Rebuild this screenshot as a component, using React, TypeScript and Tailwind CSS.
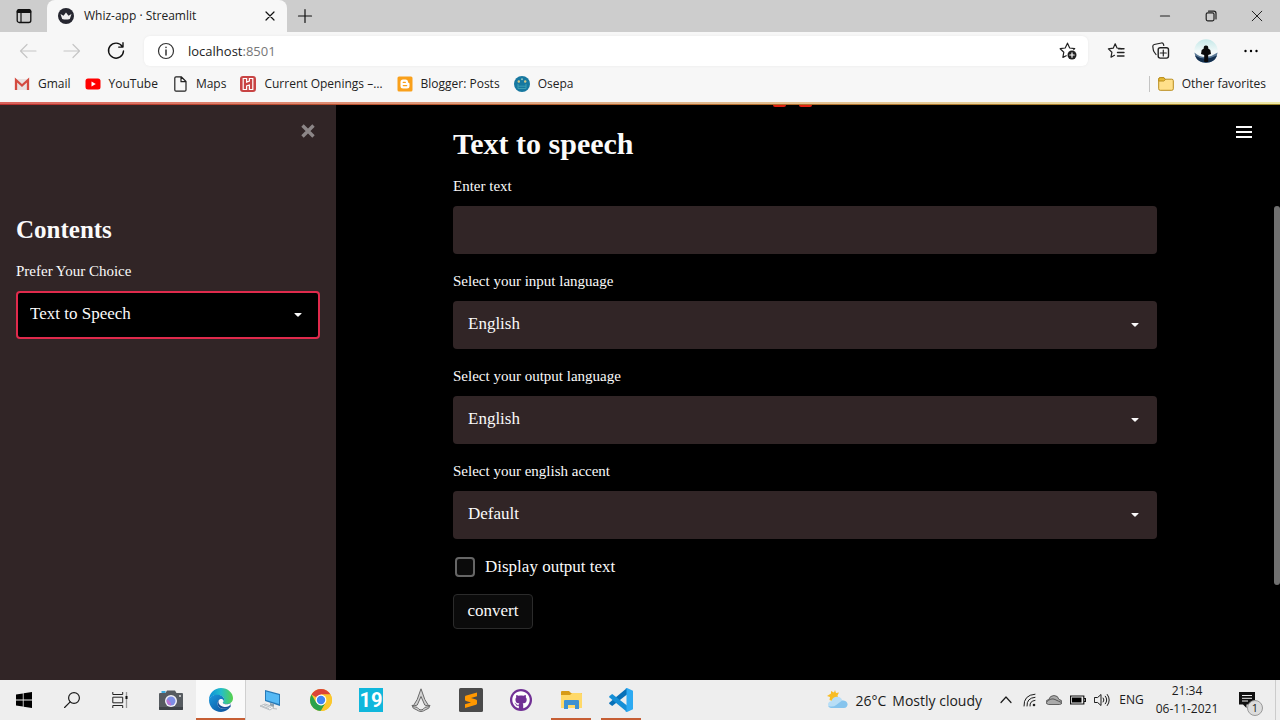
import { useState, type ReactNode } from "react";
import { FaGithub } from "react-icons/fa";

type BoxProps = { children: ReactNode; size?: string; box?: string };

function Line({ children, size = "size-5", box = "0 0 20 20" }: BoxProps) {
  return (
    <svg viewBox={box} className={size} fill="none" stroke="currentColor" strokeWidth="1.2" strokeLinecap="round" strokeLinejoin="round" aria-hidden="true">
      {children}
    </svg>
  );
}

function Art({ children, size = "size-6", box = "0 0 24 24" }: BoxProps) {
  return (
    <svg viewBox={box} className={size} aria-hidden="true">
      {children}
    </svg>
  );
}

const starPath = "M8.2 1.8 10 6l4.6.6M8.2 1.8 6.2 6.2 1.4 6.9l3.5 3.4-.9 4.9 3.5-1.9";

/* ---------- Browser chrome ---------- */

function TabStrip() {
  return (
    <div className="flex h-8 items-stretch bg-[#cdcdcd]">
      <button aria-label="Tab actions" className="flex w-[47px] items-center justify-center text-black">
        <Art size="size-4" box="0 0 16 16">
          <rect x="1.2" y="1.7" width="13.6" height="12.8" rx="2" fill="none" stroke="#111" strokeWidth="1.3" />
          <path d="M1.2 4.5V3.500a2 2 0 0 1 2-2h9.600a2 2 0 0 1 2 2v1z" fill="#111" stroke="#111" />
          <path d="M5 5v9.500" stroke="#111" strokeWidth="1.2" />
        </Art>
      </button>
      <div className="flex w-60 items-center rounded-t-lg bg-[#f7f7f7] pr-[7px] pl-[11px]">
        <Art size="size-4" box="0 0 16 16">
          <circle cx="8" cy="8" r="8" fill="#262730" />
          <path d="m2.500 6 3 1.700L8 4.600l2.500 3.100 3-1.700-1.700 5q-3.800 1-7.600 0z" fill="#f0f0f0" />
        </Art>
        <span className="flex-1 pl-2.5 text-[12px] text-[#222]">Whiz-app · Streamlit</span>
        <button aria-label="Close tab" className="flex size-5 items-center justify-center text-[#111]">
          <Line size="size-3" box="0 0 12 12">
            <path d="m2 2 8 8M10 2l-8 8" />
          </Line>
        </button>
      </div>
      <button aria-label="New tab" className="flex w-[35px] items-center justify-center text-[#111]">
        <Line size="size-4" box="0 0 16 16">
          <path d="M8 1.500v13M1.500 8h13" />
        </Line>
      </button>
      <div className="ml-auto flex text-[#222]">
        <button aria-label="Minimize" className="flex w-[46px] items-center justify-center">
          <Line size="size-3" box="0 0 12 12">
            <path d="M1.500 6h9" />
          </Line>
        </button>
        <button aria-label="Restore" className="flex w-[46px] items-center justify-center">
          <Line size="size-3" box="0 0 12 12">
            <rect x="1.2" y="2.800" width="7.800" height="8" rx="1.500" />
            <path d="M3.500 1.200h5.300q2.200 0 2.200 2.200V9" />
          </Line>
        </button>
        <button aria-label="Close window" className="flex w-[46px] items-center justify-center">
          <Line size="size-3" box="0 0 12 12">
            <path d="m1.200 1.200 9.600 9.600M10.800 1.200l-9.600 9.600" strokeWidth="1" />
          </Line>
        </button>
      </div>
    </div>
  );
}

const toolButton = "flex h-8 w-11 items-center justify-center";

function AddressRow() {
  return (
    <div className="flex items-center gap-1.5 py-[3px] pr-[7px] pl-1.5">
      <div className="flex">
        <button aria-label="Back" className={toolButton + " text-[#c6c6c6]"}>
          <Line>
            <path d="M18 10H2.500M9 3.500 2.500 10 9 16.500" />
          </Line>
        </button>
        <button aria-label="Forward" className={toolButton + " text-[#c6c6c6]"}>
          <Line>
            <path d="M2 10h15.500M11 3.500l6.500 6.500-6.500 6.500" />
          </Line>
        </button>
        <button aria-label="Refresh" className={toolButton + " text-[#111]"}>
          <Line>
            <path d="M16.200 5.400A7.500 7.500 0 1 0 17.500 10M17 1.800v4.300h-4.300" strokeWidth="1.400" />
          </Line>
        </button>
      </div>
      <div className="flex h-[30px] flex-1 items-center rounded-md bg-white pr-2.5 pl-3 shadow-[0_0_3px_rgba(0,0,0,0.06)]">
        <button aria-label="Site information" className="text-[#333]">
          <Line>
            <circle cx="10" cy="10" r="7.500" />
            <path d="M10 9v5M10 6.300v.2" strokeWidth="1.500" />
          </Line>
        </button>
        <a href="http://localhost:8501" className="flex-1 pl-3 text-[13px] leading-5 text-[#222]">
          localhost<span className="text-[#777]">:8501</span>
        </a>
        <button aria-label="Add to favorites" className="text-[#222]">
          <Line>
            <path d="M9.500 2.200 7.200 7 2.200 7.700l3.600 3.500-.9 5.200 3.300-1.700M9.500 2.200 11.700 7l5 .7-1 1" />
            <circle cx="14" cy="14" r="4.500" fill="#222" stroke="none" />
            <path d="M14 11.800v4.400M11.800 14h4.400" stroke="#fff" strokeWidth="1.200" />
          </Line>
        </button>
      </div>
      <div className="flex gap-px text-[#222]">
        <button aria-label="Favorites" className={toolButton}>
          <Line>
            <g transform="translate(1 1)">
              <path d={starPath} />
              <path d="M11.500 6.800H17M10.500 10.500H17M10.500 14H17" strokeWidth="1.400" />
            </g>
          </Line>
        </button>
        <button aria-label="Collections" className={toolButton}>
          <Line>
            <rect x="7.200" y="6.800" width="10.300" height="10.300" rx="2" strokeWidth="1.400" />
            <path d="M12.300 9v6M9.300 12h6M5 13.500 3.200 11q-.7-1-.9-2.200L1.800 5.500q-.1-1.600 1.400-2L10.500 2q1.500-.2 2 1.300l.3 1.200" />
          </Line>
        </button>
        <button aria-label="Profile" className={toolButton}>
          <Art>
            <defs>
              <linearGradient id="avatar" x2="0" y2="1">
                <stop offset="0" stopColor="#c5e8e8" />
                <stop offset=".55" stopColor="#f4fafa" />
                <stop offset="1" stopColor="#e3eef2" />
              </linearGradient>
            </defs>
            <circle cx="12" cy="12" r="11.700" fill="url(#avatar)" />
            <path d="M.4 13.500Q6 18.500 12 18t11.600-4.500Q22.500 23.600 12 23.700 1.500 23.600.4 13.500z" fill="#5a7896" />
            <path d="M1 16.500q5.500 3.500 11 3t11-3Q20.500 23.500 12 23.700 3.500 23.500 1 16.500z" fill="#14304f" />
            <path d="M12 6.500c1.800 0 2.500 1.300 2.200 2.900l2.100 1.500.7 4.200-2.800 1V23h-4v-6.900l-3.200-1 .7-4.200 2.100-1.500C9.500 7.800 10.200 6.500 12 6.500z" fill="#090909" />
          </Art>
        </button>
        <button aria-label="Settings and more" className={toolButton}>
          <Art size="size-5" box="0 0 20 20">
            <circle cx="4.500" cy="10" r="1.200" />
            <circle cx="10" cy="10" r="1.200" />
            <circle cx="15.500" cy="10" r="1.200" />
          </Art>
        </button>
      </div>
    </div>
  );
}

function Bookmark({ label, children }: { label: string; children: ReactNode }) {
  return (
    <a href="#" className="flex items-center gap-2 whitespace-nowrap">
      {children}
      {label}
    </a>
  );
}

function BookmarksRow() {
  return (
    <nav aria-label="Favorites bar" className="flex h-8 items-center gap-3.5 px-3.5 pb-1 text-[12px] text-[#222]">
      <Bookmark label="Gmail">
        <Art size="size-4" box="0 0 16 16">
          <path d="M1 3h14v11H1z" fill="#e9e3e2" />
          <path d="M2 14V4l6 5.500L14 4v10" fill="none" stroke="#d44b40" strokeWidth="2.300" />
        </Art>
      </Bookmark>
      <Bookmark label="YouTube">
        <Art size="size-4" box="0 0 16 16">
          <rect x="0.500" y="2.500" width="15" height="11" rx="2.500" fill="#f00" />
          <path d="m6.500 5.500 4.300 2.500-4.300 2.500z" fill="#fff" />
        </Art>
      </Bookmark>
      <Bookmark label="Maps">
        <Line size="size-4" box="0 0 16 16">
          <path d="M4 .8h5.200L14 5.500V14q0 1.200-1.200 1.200H4q-1.200 0-1.200-1.200V2Q2.800.8 4 .8zM9 1v4.700h4.700" />
        </Line>
      </Bookmark>
      <Bookmark label="Current Openings –…">
        <Art size="size-4" box="0 0 16 16">
          <rect width="16" height="16" rx="3" fill="#c84444" />
          <path d="M3.200 2.500h3.400v3.600l2.800-1V2.500h3.400v11H9.400V9l-2.800 1v3.500H3.200z" fill="#c84444" stroke="#fff" strokeWidth="1.200" />
        </Art>
      </Bookmark>
      <Bookmark label="Blogger: Posts">
        <Art size="size-4" box="0 0 16 16">
          <rect x="0.500" y="0.500" width="15" height="15" rx="1.500" fill="#f9a01b" />
          <path d="M6 3.500h2.500Q11 3.500 11 6q0 .8.800.9.700.1.700.8V10q0 2.500-2.500 2.500H6Q3.500 12.500 3.500 10V6Q3.500 3.500 6 3.500z" fill="#fff" />
          <path d="M6.300 6.400h2M6.300 9.600h3.400" stroke="#f9a01b" strokeWidth="1.300" strokeLinecap="round" />
        </Art>
      </Bookmark>
      <Bookmark label="Osepa">
        <Art size="size-4" box="0 0 16 16">
          <circle cx="8" cy="8" r="8" fill="#1778a0" />
          <path d="M4 8v4.500h8V8M4 10.200h8" fill="none" stroke="#3f9fb2" />
          <circle cx="4.800" cy="5.500" r="1.200" fill="#d5c987" />
          <circle cx="11.200" cy="5.500" r="1.200" fill="#d5c987" />
          <circle cx="8" cy="3.300" r="1" fill="#8fc4c0" />
        </Art>
      </Bookmark>
      <div className="ml-auto flex items-center gap-2">
        <span className="h-4 w-px bg-[#c4c4c4]" />
        <Bookmark label="Other favorites">
          <Art size="size-4" box="0 0 16 16">
            <path d="M.7 3.200q0-1.500 1.500-1.500h3.600l1.700 1.500h6.300q1.500 0 1.500 1.500v8.100q0 1.500-1.500 1.500H2.200q-1.500 0-1.500-1.500z" fill="#ffe08a" stroke="#b98d1c" />
            <path d="M.7 5h5l1.800-1.500-1.700-1.800H2.200Q.7 1.700.7 3.200z" fill="#e6ba36" stroke="#b98d1c" />
          </Art>
        </Bookmark>
      </div>
    </nav>
  );
}

/* ---------- Application ---------- */

function Caret({ place }: { place: string }) {
  return (
    <svg viewBox="0 0 8 5" className={"pointer-events-none absolute top-1/2 h-[5px] w-2 -translate-y-1/2 " + place} fill="#fafafa" aria-hidden="true">
      <path d="M.8.500h6.400q.6.200.2.700L4.500 4.100q-.5.400-1 0L.6 1.200Q.2.700.8.500z" />
    </svg>
  );
}

function SelectField({ id, label, options }: { id: string; label: string; options: string[] }) {
  return (
    <div className="flex flex-col gap-2.5">
      <label htmlFor={id} className="text-[15px] leading-5">
        {label}
      </label>
      <div className="relative">
        <select id={id} className="h-12 w-full appearance-none rounded bg-[#312526] pr-10 pb-0.5 pl-[15px] text-[17px] outline-none">
          {options.map((o) => (
            <option key={o}>{o}</option>
          ))}
        </select>
        <Caret place="right-[18px]" />
      </div>
    </div>
  );
}

function Sidebar() {
  return (
    <aside className="flex w-[336px] shrink-0 flex-col bg-[#312526] px-4 pt-4">
      <button aria-label="Close sidebar" className="mr-1 flex h-5 w-4 items-center justify-center self-end">
        <svg viewBox="0 0 16 16" className="size-4" stroke="#8c8687" strokeWidth="3.400" aria-hidden="true">
          <path d="m2.500 2.500 11 11M13.500 2.500l-11 11" />
        </svg>
      </button>
      <h2 className="mt-[73px] text-[25px] leading-8 font-bold">Contents</h2>
      <label htmlFor="choice" className="mt-[15px] text-[15px] leading-5">
        Prefer Your Choice
      </label>
      <div className="relative mt-2.5">
        <select id="choice" className="h-12 w-full appearance-none rounded border-2 border-[#e02a4c] bg-black pr-10 pb-0.5 pl-3 text-[17px] outline-none">
          <option>Text to Speech</option>
          <option>Speech to Text</option>
        </select>
        <Caret place="right-[18px]" />
      </div>
    </aside>
  );
}

function Converter() {
  const [text, setText] = useState("");
  return (
    <main className="relative flex flex-1 justify-center">
      <div className="absolute top-0 left-[437px] flex gap-[13px]">
        <span className="h-0.5 w-[13px] rounded-b-sm bg-[#e0200f]" />
        <span className="h-0.5 w-[13px] rounded-b-sm bg-[#e0200f]" />
      </div>
      <button aria-label="Main menu" className="absolute top-[19px] right-[22px] flex h-4 w-4 flex-col justify-center gap-[3px]">
        <span className="h-0.5 w-full bg-[#fafafa]" />
        <span className="h-0.5 w-full bg-[#fafafa]" />
        <span className="h-0.5 w-full bg-[#fafafa]" />
      </button>
      <form className="flex w-full max-w-[704px] flex-col gap-[17px] pt-[21px]" onSubmit={(e) => e.preventDefault()}>
        <h1 className="-mb-[3px] text-[30px] leading-9 font-bold">Text to speech</h1>
        <div className="flex flex-col gap-2.5">
          <label htmlFor="text" className="text-[15px] leading-5">
            Enter text
          </label>
          <input id="text" value={text} onChange={(e) => setText(e.target.value)} className="h-12 w-full rounded bg-[#312526] px-[15px] text-[17px] outline-none" />
        </div>
        <SelectField id="input-language" label="Select your input language" options={["English", "Hindi", "Bengali"]} />
        <SelectField id="output-language" label="Select your output language" options={["English", "Hindi", "Bengali"]} />
        <SelectField id="accent" label="Select your english accent" options={["Default", "India", "United Kingdom"]} />
        <label className="flex h-[21px] items-center gap-2.5 pl-0.5 text-[17px]">
          <input type="checkbox" className="size-5 appearance-none rounded border-2 border-[#666] bg-[#0b0b0b] checked:bg-[#e02a4c]" />
          Display output text
        </label>
        <button className="h-[35px] w-20 self-start rounded border border-[#2b2b2b] bg-[#0b0b0b] pb-0.5 text-[17px]">convert</button>
      </form>
    </main>
  );
}

/* ---------- Taskbar ---------- */

function Task({ label, state = "idle", children }: { label: string; state?: "idle" | "open" | "active"; children: ReactNode }) {
  return (
    <button aria-label={label} className={"relative flex h-10 w-[50px] items-center justify-center " + (state === "active" ? "border-r border-[#d0d0d0] bg-[#fafafa]" : "")}>
      {children}
      {state !== "idle" && <span className={"absolute bottom-0 h-0.5 bg-[#c65e34] " + (state === "active" ? "inset-x-0" : "inset-x-[5px]")} />}
    </button>
  );
}

function Taskbar() {
  return (
    <footer className="flex h-10 shrink-0 items-center bg-[#eeeeee] text-[#1b1b1b]">
      <div className="flex pr-0.5">
        <button aria-label="Start" className="flex w-12 justify-center">
          <Art size="size-4" box="0 0 16 16">
            <path d="M0 2.400 6.800 1.400v6.200H0zM7.600 1.300 16 0v7.600H7.600zM0 8.400h6.800v6.200L0 13.600zM7.600 8.400H16V16l-8.400-1.300z" />
          </Art>
        </button>
        <button aria-label="Search" className="flex w-12 justify-center">
          <Line size="size-4" box="0 0 16 16">
            <circle cx="10" cy="6" r="5.400" />
            <path d="M6.200 9.900.6 15.500" />
          </Line>
        </button>
        <button aria-label="Task view" className="flex w-12 justify-center">
          <Art size="size-4" box="0 0 16 16">
            <path d="M.8 0v2.500h9.900V0M.8 16v-2.500h9.900V16M.8 5.200h9.900v5.600H.8z" fill="none" stroke="#222" />
            <path d="M14.500 0v16" stroke="#999" strokeWidth="1.300" />
            <path d="M13.500 4h2v3h-2z" fill="#111" />
          </Art>
        </button>
      </div>
      <div className="flex">
        <Task label="Camera">
          <Art>
            <path d="M2.500 3h4v2h-4z" fill="#39a8dc" />
            <path d="M8 2.500h8l1.500 2.500H23q1 0 1 1v15q0 1-1 1H1q-1 0-1-1V6q0-1 1-1h5.500z" fill="#565b60" />
            <path d="M0 19h24v2q0 1-1 1H1q-1 0-1-1z" fill="#3e4347" />
            <circle cx="12" cy="13" r="6" fill="#f2f2f6" />
            <circle cx="12" cy="13" r="4.500" fill="#7e8ee5" />
            <path d="M8 11a4.500 4.500 0 0 0 4 6.500q1-3-4-6.500z" fill="#bb74d0" />
            <circle cx="21" cy="8" r="1" fill="#ddd" />
          </Art>
        </Task>
        <Task label="Microsoft Edge" state="active">
          <Art>
            <defs>
              <linearGradient id="edge-top" x1="0" x2="1">
                <stop offset="0" stopColor="#0b8fd8" />
                <stop offset=".5" stopColor="#23bdcb" />
                <stop offset="1" stopColor="#59d24a" />
              </linearGradient>
              <linearGradient id="edge-low" x2="1" y2="1">
                <stop offset="0" stopColor="#1997dc" />
                <stop offset="1" stopColor="#0c4c98" />
              </linearGradient>
            </defs>
            <path d="M0 12C0 5 5.500 0 12 0c7 0 12 5 12 10 0 4-3 6-6.200 6-2.300 0-4.200-.8-4-1.800.1-.6 1.300-1.200 1.300-3C15.100 9 12 7 8.500 7 4 7 1 9 0 12z" fill="url(#edge-top)" />
            <path d="M0 12c.8-3.500 4.500-5.200 8-5.200 3.800 0 7 2 7.100 4.400 0 1.800-1.200 2.400-1.300 3-1.400-3.300-5.300-2.500-5.300 1.300 0 4.500 6 7.500 12.800 3.300C19 22 16 24 12 24 5.300 24 0 19 0 12z" fill="url(#edge-low)" />
            <path d="M8.500 15.500c0-4.600 4-5 5.300-1.300-.2 1 1.700 1.800 4 1.800 1.500 0 2.700-.3 3.800-1v4C15 23 8.500 20 8.500 15.500z" fill="#164f99" />
            <path d="M9.500 13c.8-2.500 4.600-2.500 5-.3.200 1-.7 1.300-.7 2 .3 1.300 2.500 1.600 4.500 1.500 2 0 3.400-.8 4.200-1.500-1 3-4 4.500-7 4.200-3.500-.3-6.500-2.700-6-5.900z" fill="#fafafa" />
          </Art>
        </Task>
        <Task label="Remote desktop">
          <Art>
            <path d="m6 2 15 4v12L6 13z" fill="#2779b7" />
            <path d="m7 3.500 13 3.500v9L7 12z" fill="#55b9f5" />
            <path d="m11 15 4 1v3l-4-1z" fill="#8da0ad" />
            <path d="m1 18 5-2 9 3-4 3z" fill="#f5f5f5" stroke="#a9b1b6" strokeWidth=".8" />
            <path d="m3 18 7 2.500M5 17l7 2.500m2 1 4 .5" stroke="#a9b1b6" strokeWidth=".8" />
          </Art>
        </Task>
        <Task label="Google Chrome">
          <Art>
            <circle cx="12" cy="12" r="11" fill="#fbc72c" />
            <path d="M12 12 2.500 6.500A11 11 0 0 1 21.500 6.500H12z" fill="#dc4437" />
            <path d="M2.500 6.500 7.300 14.800 12 17.500l-.5 5.500A11 11 0 0 1 2.500 6.500z" fill="#2ba24c" />
            <path d="m7.300 14.700 4.700 2.800 4.700-2.800L11.900 23z" fill="#2ba24c" />
            <path d="m16.700 14.700-4.800 8.300A11 11 0 0 0 21.500 6.500H12z" fill="#fbc72c" />
            <circle cx="12" cy="12" r="5.400" fill="#fff" />
            <circle cx="12" cy="12" r="4.200" fill="#4186f3" />
          </Art>
        </Task>
        <Task label="FIFA 19">
          <span className="flex size-6 items-center justify-center bg-[#10b7dc] font-['Liberation_Sans_Narrow','Roboto',sans-serif] text-[20px] leading-6 font-bold text-white">19</span>
        </Task>
        <Task label="Assassin's Creed">
          <Art>
            <g fill="#d2d2d2" stroke="#686868" strokeWidth="1">
              <path d="m12 .8 3.800 10.700 4 6.500-4-.9L12 8.500l-3.800 8.600-4 .9 4-6.500z" />
              <path d="M3 17q2 2.500 5 2.300 2 2.700 4 2.700t4-2.700q3 .2 5-2.300-.5 4-4 4.500Q14 23.500 12 23.500T7 21.500Q3.500 21 3 17z" />
            </g>
          </Art>
        </Task>
        <Task label="Sublime Text">
          <Art>
            <rect width="24" height="24" rx="1.500" fill="#4a4a4a" />
            <path d="M6.500 7.800 18 4.600v3.600l-6 1.800 5 1.500q1 .3 1 1.300v2.700q0 1-1 1.300L6 20v-3.700l6-1.800-5-1.500q-1-.3-1-1.300V9q0-.9.500-1.200z" fill="#ff9800" />
          </Art>
        </Task>
        <Task label="GitHub Desktop">
          <span className="flex size-[22px] items-center justify-center rounded-full bg-[#713095]">
            <FaGithub className="size-[18px] text-white" />
          </span>
        </Task>
        <Task label="File Explorer" state="open">
          <Art>
            <path d="M2 4q0-1 1-1h7l2 2h10q1 0 1 1v4H2z" fill="#d79b18" />
            <path d="M2 7h9l2-2h9q1 0 1 1v14H2z" fill="#ffd969" />
            <path d="M5 21v-8q0-1 1-1h13q1 0 1 1v8h-4v-4H9v4z" fill="#3d91d2" />
          </Art>
        </Task>
        <Task label="Visual Studio Code" state="open">
          <Art>
            <path d="M18 0v6.500L3.200 18 .5 16q-.7-.8 0-1.500z" fill="#0871b8" />
            <path d="M18 24v-6.500L3.200 6 .5 8q-.7.800 0 1.500z" fill="#168fd6" />
            <path d="m18 0 6 2.800v18.400L18 24q-1 .3-1.800-.6 1.300.5 1.300-.8V1.400q0-1.300-1.300-.8Q17-.3 18 0z" fill="#2daaf2" />
          </Art>
        </Task>
      </div>
      <div className="ml-auto flex items-center whitespace-nowrap">
        <button className="flex items-center gap-1.5 pr-3 text-[14px]">
          <Art>
            <path d="m10 2 1 3 3-.5-1.500 3 1 3-5 3-4-1.500.5-3-3-1 4-2.500L6 3l3 1.500z" fill="#f8bd24" />
            <path d="M6 20q-3-.5-3-3.500T6.500 13Q8 8.500 12.500 8.800q3.500.2 4.700 3.600 5 0 5.300 3.900-.2 3.700-4 3.700z" fill="#b8def6" />
            <path d="M6 20q-2-.3-2.800-2 5 1.500 8-1t6-4.600q5 0 5.300 3.900-.2 3.700-4 3.700z" fill="#86c4ed" />
          </Art>
          <span>26°C</span>
          <span>Mostly cloudy</span>
        </button>
        <button aria-label="Hidden icons" className="flex w-6 justify-center">
          <Line size="size-4" box="0 0 16 16">
            <path d="m3 10.500 5-5.500 5 5.500" />
          </Line>
        </button>
        <button aria-label="Network" className="flex w-6 justify-center">
          <Line size="size-4" box="0 0 16 16">
            <path d="M2 14Q1.500 3 13 2.200M5 14Q4.500 6 13 5.300M8 14Q7.500 9 13 8.400" strokeWidth="1" />
            <circle cx="12" cy="13" r="1.300" fill="#222" stroke="none" />
          </Line>
        </button>
        <button aria-label="OneDrive" className="flex w-6 justify-center">
          <Art size="size-4" box="0 0 16 16">
            <path d="M2.500 12.500Q0 12 0 10t2.700-2.500Q4 3.500 8 3.500t5 4q3 .3 3 2.800-.2 2.200-2.500 2.200z" fill="#aaa" stroke="#444" strokeWidth=".8" />
            <path d="M.5 10Q5 5.500 9 7.500t6.500 3" fill="none" stroke="#555" />
          </Art>
        </button>
        <button aria-label="Battery" className="flex w-6 justify-center">
          <Art size="size-4" box="0 0 16 16">
            <path d="M.6 4h13.200v8H.6zM14 6.500h1.500v3H14" fill="none" stroke="#111" strokeWidth="1.200" />
            <path d="M2 5.500h9.500v5H2z" />
          </Art>
        </button>
        <button aria-label="Volume" className="flex w-6 justify-center">
          <Line size="size-4" box="0 0 16 16">
            <path d="M.8 5.500h2.800L7 2.500v11l-3.400-3H.8zM9.200 6q1.600 2 0 4M11.300 4.200q3 3.800 0 7.600M13.300 2.500q4 5.500 0 11" strokeWidth="1" />
          </Line>
        </button>
        <button className="w-[35px] text-center text-[12px]">ENG</button>
        <button className="w-[76px] text-center text-[12px] leading-[18px]">
          21:34
          <br />
          06-11-2021
        </button>
        <button aria-label="Notifications" className="relative flex h-10 w-[50px] items-center justify-center pr-1.5">
          <Art size="size-4" box="0 0 16 16">
            <path d="M0 0h16v12.500H7.500V16L4 12.500H0z" fill="#111" />
            <path d="M3 3.500h10M3 6.300h10M3 9h6" stroke="#eee" />
          </Art>
          <span className="absolute right-3 bottom-1 flex size-4 items-center justify-center rounded-full border border-[#999] bg-[#dcdcdc] text-[11px]">1</span>
        </button>
        <span className="mr-1 h-10 w-px bg-[#ccc]" />
      </div>
    </footer>
  );
}

export default function App() {
  return (
    <div className="flex min-h-screen flex-col bg-black font-['Open_Sans',sans-serif]">
      <header className="bg-[#f7f7f7]">
        <TabStrip />
        <AddressRow />
        <BookmarksRow />
        <div className="h-0.5 bg-linear-to-r from-[#d9635c] via-[#dfb48c] to-[#eee9a8]" />
        <div className="h-px bg-linear-to-r from-[#b8302f] via-[#b5672f] to-[#a08a2c]" />
      </header>
      <div className="flex flex-1 font-['Source_Serif_Pro','Liberation_Serif',serif] text-[#fafafa]">
        <Sidebar />
        <Converter />
        <div className="flex w-1.5 flex-col pt-[101px] pb-[95px]">
          <span className="flex-1 rounded-full bg-[#707070]" />
        </div>
      </div>
      <Taskbar />
    </div>
  );
}
